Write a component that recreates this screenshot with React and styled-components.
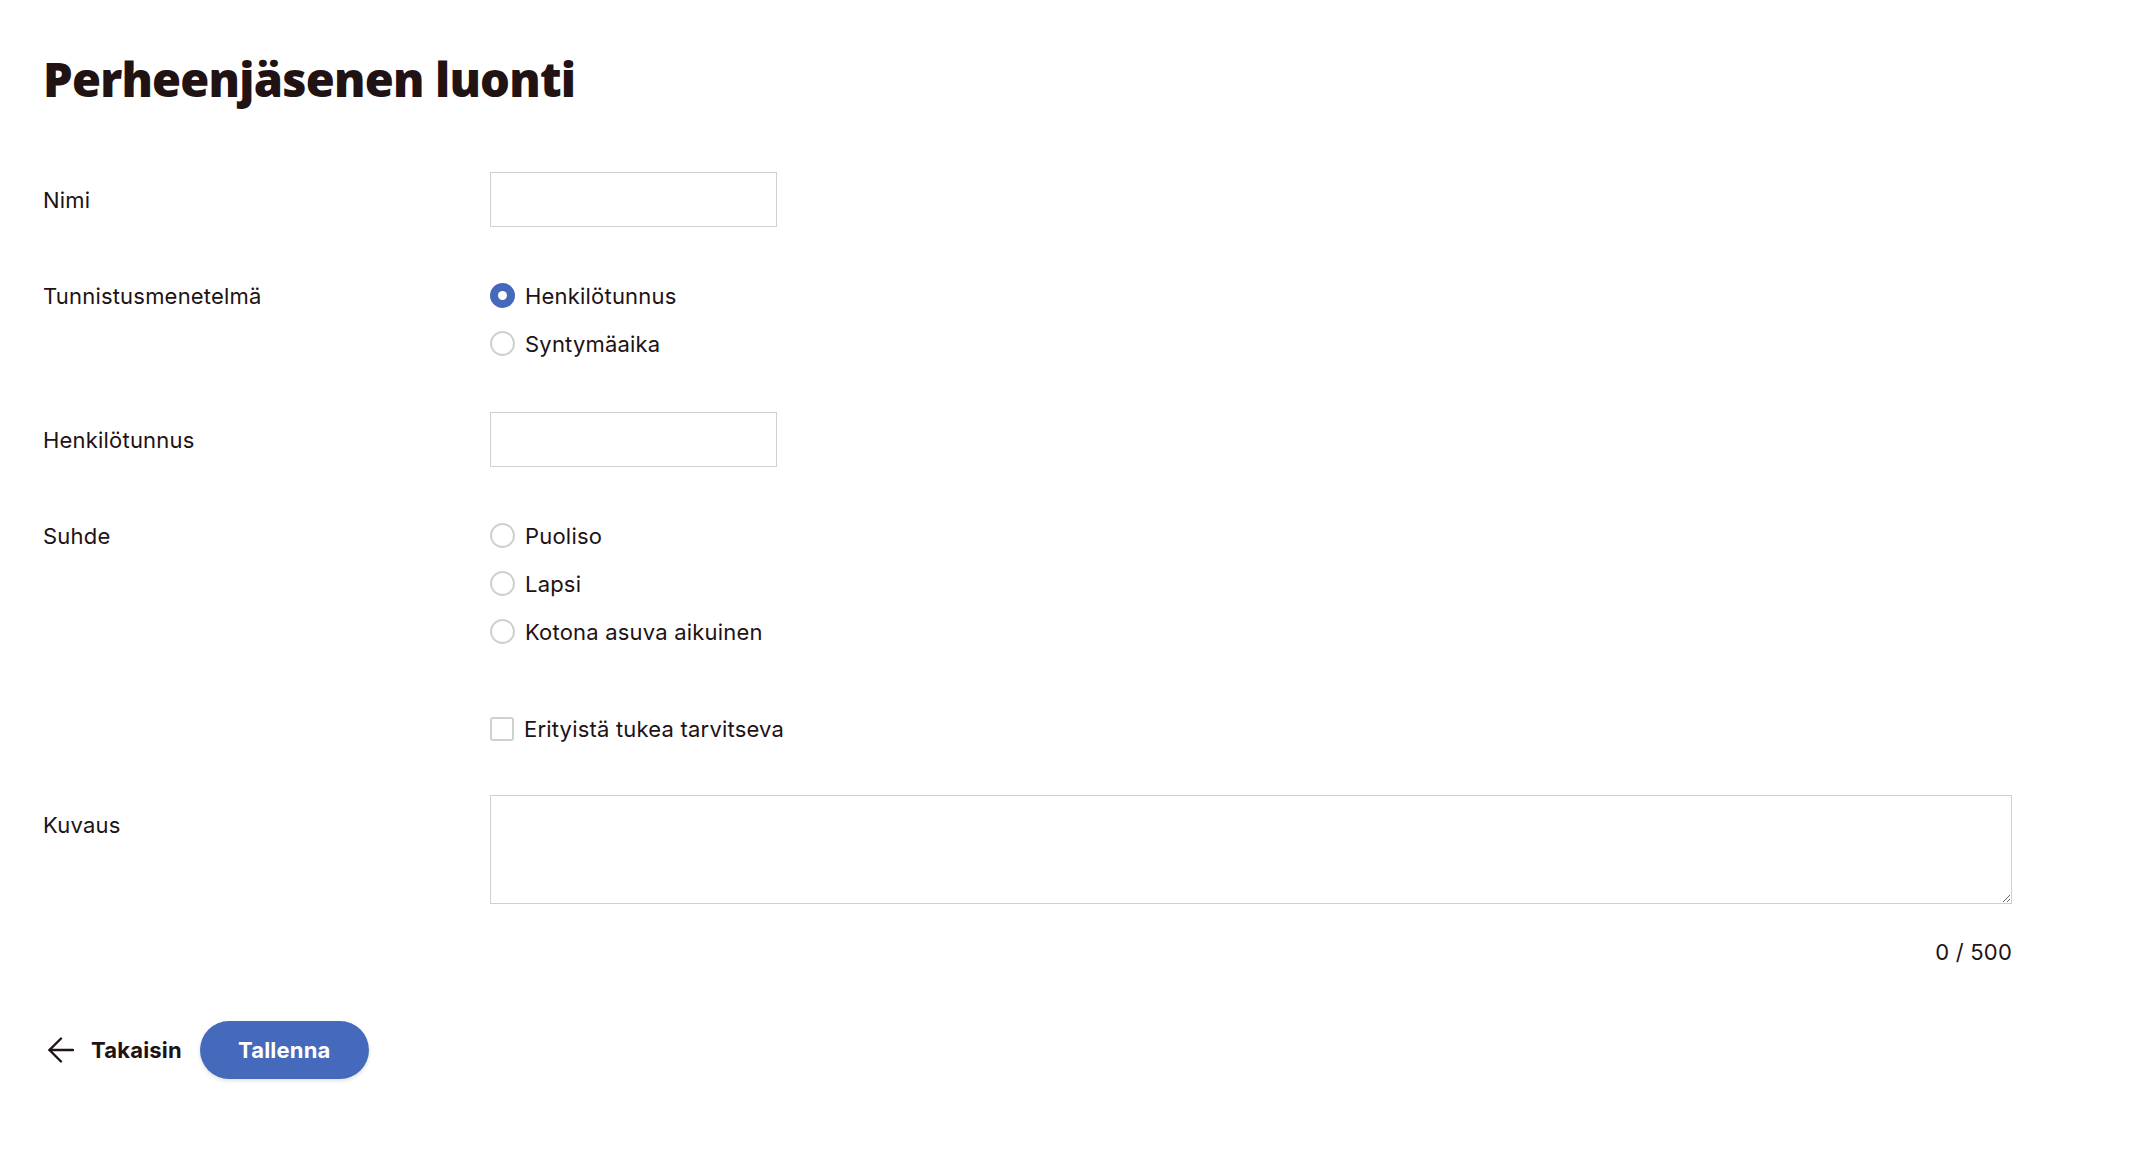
import React, { useState } from 'react';
import styled, { createGlobalStyle } from 'styled-components';

const GlobalStyle = createGlobalStyle`
  html, body {
    margin: 0;
    padding: 0;
    background: #ffffff;
  }
  body {
    font-family: Inter, "Noto Sans", sans-serif;
    color: #211214;
  }
  * {
    box-sizing: border-box;
  }
`;

const Page = styled.main`
  padding: 51px 118px 60px 43px;
`;

const Title = styled.h1`
  margin: 0 0 64px 0;
  font-family: "Open Sans", Lato, sans-serif;
  font-weight: 800;
  font-size: 47px;
  line-height: 1.22;
  letter-spacing: -0.8px;
  color: #211214;
`;

const Form = styled.div`
  display: flex;
  flex-direction: column;
  gap: 54px;
`;

const Row = styled.div`
  display: grid;
  grid-template-columns: 447px 1fr;
  align-items: start;
  margin-top: ${p => p.$extraTop || 0}px;
`;

const Label = styled.div`
  font-size: 22px;
  letter-spacing: 0.2px;
  height: ${p => p.$height || 29}px;
  display: flex;
  align-items: center;
  margin-top: ${p => p.$offset || 0}px;
`;

const TextInput = styled.input`
  width: 287px;
  height: 55px;
  border: 1.5px solid #d0d0d0;
  border-radius: 0;
  padding: 0 14px;
  font: inherit;
  font-size: 22px;
  color: inherit;
  outline: none;
`;

const OptionList = styled.div`
  display: flex;
  flex-direction: column;
  gap: 19px;
`;

const Option = styled.label`
  display: flex;
  align-items: center;
  gap: 10px;
  height: 29px;
  font-size: 22px;
  letter-spacing: 0.2px;
  cursor: pointer;
`;

const RadioDot = styled.span`
  width: 25px;
  height: 25px;
  border-radius: 50%;
  flex-shrink: 0;
  border: 2.5px solid ${p => (p.$checked ? '#4569bb' : '#d0d0d0')};
  background: ${p => (p.$checked ? '#4569bb' : '#ffffff')};
  display: flex;
  align-items: center;
  justify-content: center;

  &::after {
    content: '';
    display: ${p => (p.$checked ? 'block' : 'none')};
    width: 9px;
    height: 9px;
    border-radius: 50%;
    background: #ffffff;
  }
`;

const CheckBox = styled.span`
  width: 24px;
  height: 24px;
  flex-shrink: 0;
  border-radius: 3px;
  border: 2.5px solid ${p => (p.$checked ? '#4569bb' : '#d0d0d0')};
  background: ${p => (p.$checked ? '#4569bb' : '#ffffff')};
`;

const TextArea = styled.textarea`
  display: block;
  width: 100%;
  height: 109px;
  border: 1.5px solid #d0d0d0;
  border-radius: 0;
  padding: 14px 16px;
  font: inherit;
  font-size: 22px;
  color: inherit;
  resize: vertical;
  outline: none;
`;

const Counter = styled.div`
  margin-top: 34px;
  text-align: right;
  font-size: 22px;
  letter-spacing: 0.2px;
  line-height: 29px;
`;

const Actions = styled.div`
  display: flex;
  align-items: center;
  gap: 18px;
  margin-top: 54px;
`;

const BackButton = styled.button`
  display: flex;
  align-items: center;
  gap: 17px;
  padding: 0 0 0 5px;
  border: none;
  background: none;
  font-family: Inter, "Noto Sans", sans-serif;
  font-weight: 700;
  font-size: 22px;
  letter-spacing: 0.2px;
  color: #211214;
  cursor: pointer;
`;

const PrimaryButton = styled.button`
  height: 58px;
  padding: 0 38px;
  border: none;
  border-radius: 29px;
  background: #4569bb;
  color: #ffffff;
  font-family: Inter, "Noto Sans", sans-serif;
  font-weight: 700;
  font-size: 22px;
  letter-spacing: 0.2px;
  box-shadow: 0 2px 4px rgba(0, 0, 0, 0.12);
  cursor: pointer;
`;

const ArrowLeft = () => (
  <svg width="26" height="26" viewBox="0 0 26 26" fill="none" stroke="currentColor" strokeWidth="2.4" strokeLinecap="round" strokeLinejoin="round">
    <path d="M25 13H1.5" />
    <path d="M13 1.5L1.5 13L13 24.5" />
  </svg>
);

const RadioGroup = ({ options, value, onChange }) => (
  <OptionList>
    {options.map(opt => (
      <Option key={opt} onClick={() => onChange(opt)}>
        <RadioDot $checked={value === opt} />
        {opt}
      </Option>
    ))}
  </OptionList>
);

const App = () => {
  const [method, setMethod] = useState('Henkilötunnus');
  const [relation, setRelation] = useState(null);
  const [special, setSpecial] = useState(false);
  const [description, setDescription] = useState('');

  return (
    <Page>
      <GlobalStyle />
      <Title>Perheenjäsenen luonti</Title>
      <Form>
        <Row>
          <Label $height={55}>Nimi</Label>
          <TextInput type="text" />
        </Row>
        <Row>
          <Label>Tunnistusmenetelmä</Label>
          <RadioGroup options={['Henkilötunnus', 'Syntymäaika']} value={method} onChange={setMethod} />
        </Row>
        <Row>
          <Label $height={55}>Henkilötunnus</Label>
          <TextInput type="text" />
        </Row>
        <Row>
          <Label>Suhde</Label>
          <RadioGroup
            options={['Puoliso', 'Lapsi', 'Kotona asuva aikuinen']}
            value={relation}
            onChange={setRelation}
          />
        </Row>
        <Row $extraTop={14}>
          <div />
          <Option onClick={() => setSpecial(!special)}>
            <CheckBox $checked={special} />
            Erityistä tukea tarvitseva
          </Option>
        </Row>
        <Row $extraTop={-2}>
          <Label $offset={15}>Kuvaus</Label>
          <div>
            <TextArea maxLength={500} value={description} onChange={e => setDescription(e.target.value)} />
            <Counter>{description.length} / 500</Counter>
          </div>
        </Row>
      </Form>
      <Actions>
        <BackButton>
          <ArrowLeft />
          Takaisin
        </BackButton>
        <PrimaryButton>Tallenna</PrimaryButton>
      </Actions>
    </Page>
  );
};

export default App;
